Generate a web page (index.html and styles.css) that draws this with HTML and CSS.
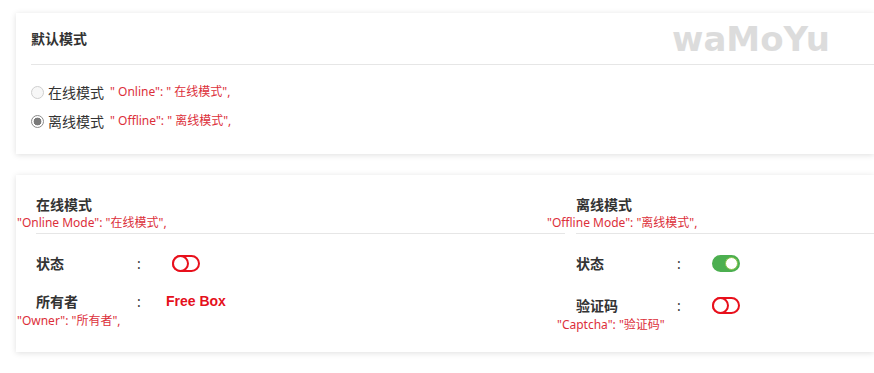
FILE: index.html
```html
<!DOCTYPE html>
<html lang="zh-CN">

<head>
    <meta charset="UTF-8">
    <meta name="viewport" content="width=device-width, initial-scale=1.0">
    <title>模式设置</title>
    <link rel="stylesheet" href="styles.css">
</head>

<body>

    <!-- Default mode card -->
    <section class="card mode-card">
        <div class="card-header">
            <h2>默认模式</h2>
        </div>
        <div class="watermark">waMoYu</div>
        <div class="card-body">
            <label class="radio-row">
                <input type="radio" name="mode" value="online">
                <span class="radio-text">在线模式</span>
                <span class="note">" Online": " 在线模式",</span>
            </label>
            <label class="radio-row">
                <input type="radio" name="mode" value="offline" checked>
                <span class="radio-text">离线模式</span>
                <span class="note">" Offline": " 离线模式",</span>
            </label>
        </div>
    </section>

    <!-- Mode details card -->
    <section class="card detail-card">
        <div class="col col-left">
            <div class="col-head">
                <h3>在线模式</h3>
                <p class="note block">"Online Mode": "在线模式",</p>
            </div>
            <div class="row">
                <span class="label">状态</span>
                <span class="colon">:</span>
                <span class="switch"></span>
            </div>
            <div class="row">
                <span class="label">所有者</span>
                <span class="colon">:</span>
                <span class="owner">Free Box</span>
            </div>
            <p class="note block">"Owner": "所有者",</p>
        </div>

        <div class="col col-right">
            <div class="col-head">
                <h3>离线模式</h3>
                <p class="note block wide">"Offline Mode": "离线模式",</p>
            </div>
            <div class="row">
                <span class="label">状态</span>
                <span class="colon">:</span>
                <span class="switch on"></span>
            </div>
            <div class="row">
                <span class="label">验证码</span>
                <span class="colon">:</span>
                <span class="switch"></span>
            </div>
            <p class="note block">"Captcha": "验证码"</p>
        </div>
    </section>

</body>

</html>
```

FILE: styles.css
```css
/* Basic Reset */
*,
*::before,
*::after {
    margin: 0;
    padding: 0;
    box-sizing: border-box;
}

body {
    background: #fff;
    font-family: "Noto Sans", "Noto Sans CJK SC", sans-serif;
    color: #333;
    padding: 13px 0 20px 16px;
}

/* Cards (they run on past the right edge of the window) */
.card {
    position: relative;
    width: 100%;
    background: #fff;
    box-shadow: 0 1px 6px rgba(0, 0, 0, 0.13);
}

.mode-card {
    margin-bottom: 21px;
}

.card-header {
    height: 52px;
    margin-left: 15px;
    border-bottom: 1px solid #e6e6e6;
    display: flex;
    align-items: center;
}

.card-header h2 {
    font-size: 14px;
    font-weight: 700;
    line-height: 20px;
}

/* Watermark */
.watermark {
    position: absolute;
    top: 6px;
    left: 656px;
    font-family: "DejaVu Sans", sans-serif;
    font-weight: 700;
    font-size: 34px;
    line-height: 40px;
    color: #dcdcdc;
}

.card-body {
    padding: 17px 15px 23px;
    display: flex;
    flex-direction: column;
    gap: 9px;
}

/* Radios */
.radio-row {
    display: flex;
    align-items: center;
    height: 20px;
    font-size: 14px;
}

.radio-row input {
    appearance: none;
    width: 13px;
    height: 13px;
    border-radius: 50%;
    border: 1px solid #cfcfcf;
    background: #f7f7f7;
    margin-right: 4px;
}

.radio-row input:checked {
    border-color: #8a8a8a;
    background: radial-gradient(circle, #7a7a7a 0 3.6px, #fff 4.2px);
}

.radio-text {
    margin-right: 6px;
}

/* Red translation notes */
.note {
    font-size: 12px;
    line-height: 16px;
    color: #dc2f3a;
}

.note.block {
    display: block;
    margin-left: -19px;
}

.note.wide {
    margin-left: -29px;
}

/* Detail card */
.detail-card {
    display: flex;
    gap: 11px;
    padding: 20px 0 19px 20px;
}

.col-left {
    width: 529px;
    flex: none;
}

.col-right {
    flex: 1;
}

.col-head {
    border-bottom: 1px solid #e6e6e6;
    padding-bottom: 2px;
    margin-bottom: 17px;
}

.col-head h3 {
    font-size: 14px;
    font-weight: 700;
    line-height: 20px;
}

.row {
    display: flex;
    align-items: center;
    height: 24px;
    font-size: 14px;
}

.col-left .row + .row {
    margin-top: 14px;
}

.col-right .row + .row {
    margin-top: 18px;
}

.label {
    width: 101px;
    font-weight: 700;
}

.colon {
    width: 35px;
}

.owner {
    margin-left: -6px;
    font-family: "Liberation Sans", Arial, sans-serif;
    font-weight: 700;
    font-size: 14px;
    color: #e5101c;
}

/* Toggle switches */
.switch {
    position: relative;
    display: inline-block;
    width: 28px;
    height: 17px;
    border: 2px solid #e8101c;
    border-radius: 9px;
    background: #fff;
}

.switch::after {
    content: "";
    position: absolute;
    top: -2px;
    left: -2px;
    width: 17px;
    height: 17px;
    border: 2px solid #e8101c;
    border-radius: 50%;
    background: #fff;
}

.switch.on {
    background: #4caf50;
    border-color: #4caf50;
}

.switch.on::after {
    left: 11px;
    top: 0;
    width: 13px;
    height: 13px;
    border: 1px solid #8bc34a;
}
```
